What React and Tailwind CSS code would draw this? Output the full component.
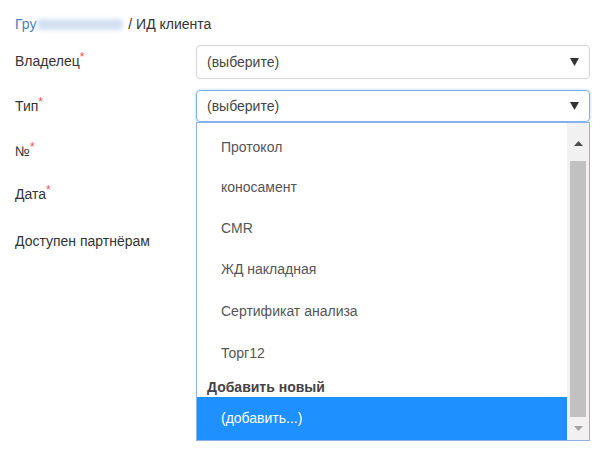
import React from "react";

function Caret({ className = "" }) {
  return (
    <svg width="9" height="8" viewBox="0 0 9 8" className={className}>
      <path d="M0 0 H9 L4.5 8 Z" fill="#333" />
    </svg>
  );
}

function Req() {
  return <span className="text-[#f0504f] text-[12px] align-top relative top-[-3px]">*</span>;
}

function Field({ label, req, children, h = "h-[45px]" }) {
  return (
    <div className={`flex ${h}`}>
      <div className="w-[181px] shrink-0 pt-[6px] text-[#333]">
        {label}
        {req && <Req />}
      </div>
      <div className="w-[394px] shrink-0">{children}</div>
    </div>
  );
}

const items = [
  ["Протокол", "h-[42px]"],
  ["коносамент", "h-[39px]"],
  ["CMR", "h-[42px]"],
  ["ЖД накладная", "h-[41px]"],
  ["Сертификат анализа", "h-[43px]"],
  ["Торг12", "h-[41px]"],
];

export default function App() {
  return (
    <div
      className="relative w-[600px] h-[454px] bg-white text-[14px] overflow-hidden"
      style={{ fontFamily: '"Liberation Sans", Arial, sans-serif' }}
    >
      <div className="pl-[15px] pt-[15px]">
        <div className="flex items-center h-[18px] text-[#333]">
          <span className="text-[#4d7cc0]">Гру</span>
          <span className="inline-block w-[86px] h-[11px] bg-[#d3e1f3] blur-[2px] rounded-sm mx-[1px]" />
          <span>&nbsp;/ ИД клиента</span>
        </div>

        <div className="mt-[12px] flex flex-col">
          <Field label="Владелец" req>
            <div className="h-[34px] border border-[#d4d4d4] rounded-[4px] flex items-center justify-between pl-[10px] pr-[10px] text-[#444]">
              <span>(выберите)</span>
              <Caret />
            </div>
          </Field>
          <Field label="Тип" req>
            <div className="h-[32px] border border-[#7fb2ea] rounded-[4px] flex items-center justify-between pl-[10px] pr-[10px] text-[#444] shadow-[0_0_3px_rgba(102,175,233,0.6)]">
              <span>(выберите)</span>
              <Caret />
            </div>
          </Field>
          <Field label="№" req h="h-[43px]" />
          <Field label="Дата" req h="h-[47px]" />
          <Field label="Доступен партнёрам" />
        </div>
      </div>

      <div className="absolute left-[196px] top-[122px] w-[394px] h-[319px] border border-[#8db1e4] bg-white flex">
        <div className="flex-1 flex flex-col pt-[3px]">
          {items.map(([t, h]) => (
            <div key={t} className={`${h} flex items-center pl-[24px] text-[#555]`}>
              {t}
            </div>
          ))}
          <div className="h-[23px] flex items-center pt-[4px] pl-[10px] font-bold text-[#444]">Добавить новый</div>
          <div className="h-[43px] flex items-center pl-[24px] bg-[#1e90ff] text-white">(добавить...)</div>
        </div>
        <div className="w-[22px] bg-[#f1f1f1] flex flex-col items-center">
          <div className="h-[38px] flex items-center justify-center pt-[2px]">
            <svg width="9" height="5" viewBox="0 0 9 5"><path d="M0 5 H9 L4.5 0 Z" fill="#505050" /></svg>
          </div>
          <div className="w-[16px] h-[256px] bg-[#c1c1c1]" />
          <div className="flex-1 flex items-center justify-center">
            <svg width="9" height="5" viewBox="0 0 9 5"><path d="M0 0 H9 L4.5 5 Z" fill="#a3a3a3" /></svg>
          </div>
        </div>
      </div>
    </div>
  );
}
